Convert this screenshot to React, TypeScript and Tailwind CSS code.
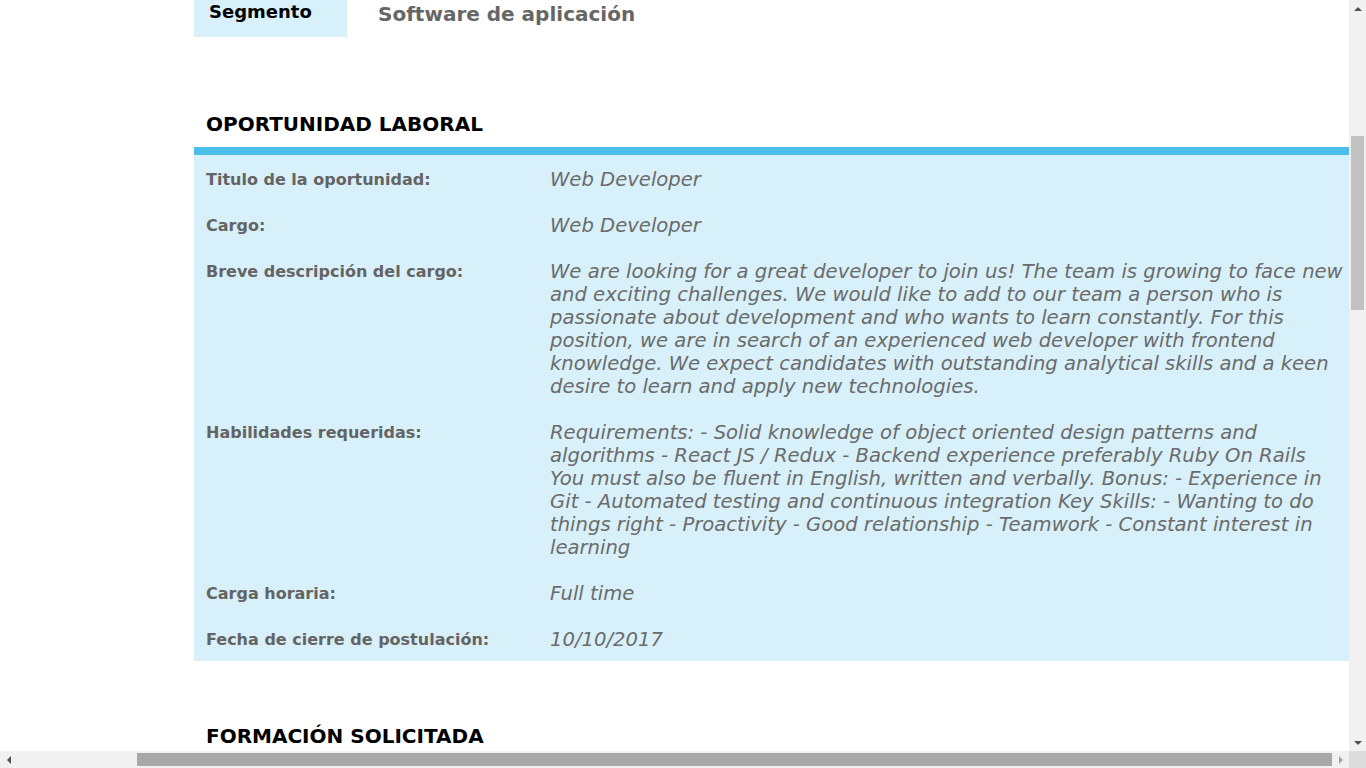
const rows: { label: string; lines: string[] }[] = [
  { label: "Titulo de la oportunidad:", lines: ["Web Developer"] },
  { label: "Cargo:", lines: ["Web Developer"] },
  {
    label: "Breve descripción del cargo:",
    lines: [
      "We are looking for a great developer to join us! The team is growing to face new",
      "and exciting challenges. We would like to add to our team a person who is",
      "passionate about development and who wants to learn constantly. For this",
      "position, we are in search of an experienced web developer with frontend",
      "knowledge. We expect candidates with outstanding analytical skills and a keen",
      "desire to learn and apply new technologies.",
    ],
  },
  {
    label: "Habilidades requeridas:",
    lines: [
      "Requirements: - Solid knowledge of object oriented design patterns and",
      "algorithms - React JS / Redux - Backend experience preferably Ruby On Rails",
      "You must also be fluent in English, written and verbally. Bonus: - Experience in",
      "Git - Automated testing and continuous integration Key Skills: - Wanting to do",
      "things right - Proactivity - Good relationship - Teamwork - Constant interest in",
      "learning",
    ],
  },
  { label: "Carga horaria:", lines: ["Full time"] },
  { label: "Fecha de cierre de postulación:", lines: ["10/10/2017"] },
];

function Arrow({ dir, color }: { dir: "up" | "down" | "left" | "right"; color: string }) {
  const pts = {
    up: "0,4 4,0 8,4",
    down: "0,0 8,0 4,4",
    left: "4,0 4,8 0,4",
    right: "0,0 4,4 0,8",
  }[dir];
  const w = dir === "up" || dir === "down" ? 8 : 4;
  const h = dir === "up" || dir === "down" ? 4 : 8;
  return (
    <svg width={w} height={h} viewBox={`0 0 ${w} ${h}`}>
      <polygon points={pts} fill={color} />
    </svg>
  );
}

export default function App() {
  return (
    <div className="flex flex-col w-[1366px] h-[768px] overflow-hidden bg-white font-['DejaVu_Sans',sans-serif]">
      <div className="flex flex-1 min-h-0">
        <main className="flex-1 min-w-0 overflow-hidden pl-[194px]">
          <div className="flex items-start">
            <div className="w-[153px] h-[37px] bg-[#d8f0fa] pl-[15px]">
              <span className="block text-[18px] leading-[23px] font-bold text-black">Segmento</span>
            </div>
            <span className="ml-[31px] mt-px text-[20px] leading-[26px] font-bold text-[#666666]">
              Software de aplicación
            </span>
          </div>

          <h2 className="mt-[74px] pl-3 text-[20px] leading-[26px] font-bold text-black">
            OPORTUNIDAD LABORAL
          </h2>
          <div className="mt-[10px] h-2 bg-[#4bbfe9]" />
          <div className="bg-[#d8f0fa] pt-[13px] pb-[10px] pl-3 flex flex-col gap-[23px]">
            {rows.map((r) => (
              <div key={r.label} className="flex">
                <div className="w-[344px] shrink-0 text-[16px] leading-[23px] font-bold text-[#646464]">
                  {r.label}
                </div>
                <div className="text-[19.6px] leading-[23px] italic text-[#6b6b6b] whitespace-nowrap">
                  {r.lines.map((l, i) => (
                    <div key={i}>{l}</div>
                  ))}
                </div>
              </div>
            ))}
          </div>

          <h2 className="mt-[62px] pl-3 text-[20px] leading-[26px] font-bold text-black">
            FORMACIÓN SOLICITADA
          </h2>
        </main>

        <div className="w-[17px] shrink-0 bg-[#f1f1f1] flex flex-col items-center">
          <div className="h-[17px] flex items-center justify-center">
            <Arrow dir="up" color="#505050" />
          </div>
          <div className="mt-[119px] w-[13px] h-[174px] bg-[#c1c1c1]" />
          <div className="flex-1" />
          <div className="h-[17px] flex items-center justify-center">
            <Arrow dir="down" color="#505050" />
          </div>
        </div>
      </div>

      <div className="h-[17px] shrink-0 flex bg-[#f1f1f1]">
        <div className="w-[17px] flex items-center justify-center">
          <Arrow dir="left" color="#505050" />
        </div>
        <div className="flex-1 flex items-center">
          <div className="ml-[120px] w-[1195px] h-[13px] bg-[#a8a8a8]" />
        </div>
        <div className="w-[17px] flex items-center justify-center">
          <Arrow dir="right" color="#a3a3a3" />
        </div>
        <div className="w-[17px] bg-[#dcdcdc]" />
      </div>
    </div>
  );
}
